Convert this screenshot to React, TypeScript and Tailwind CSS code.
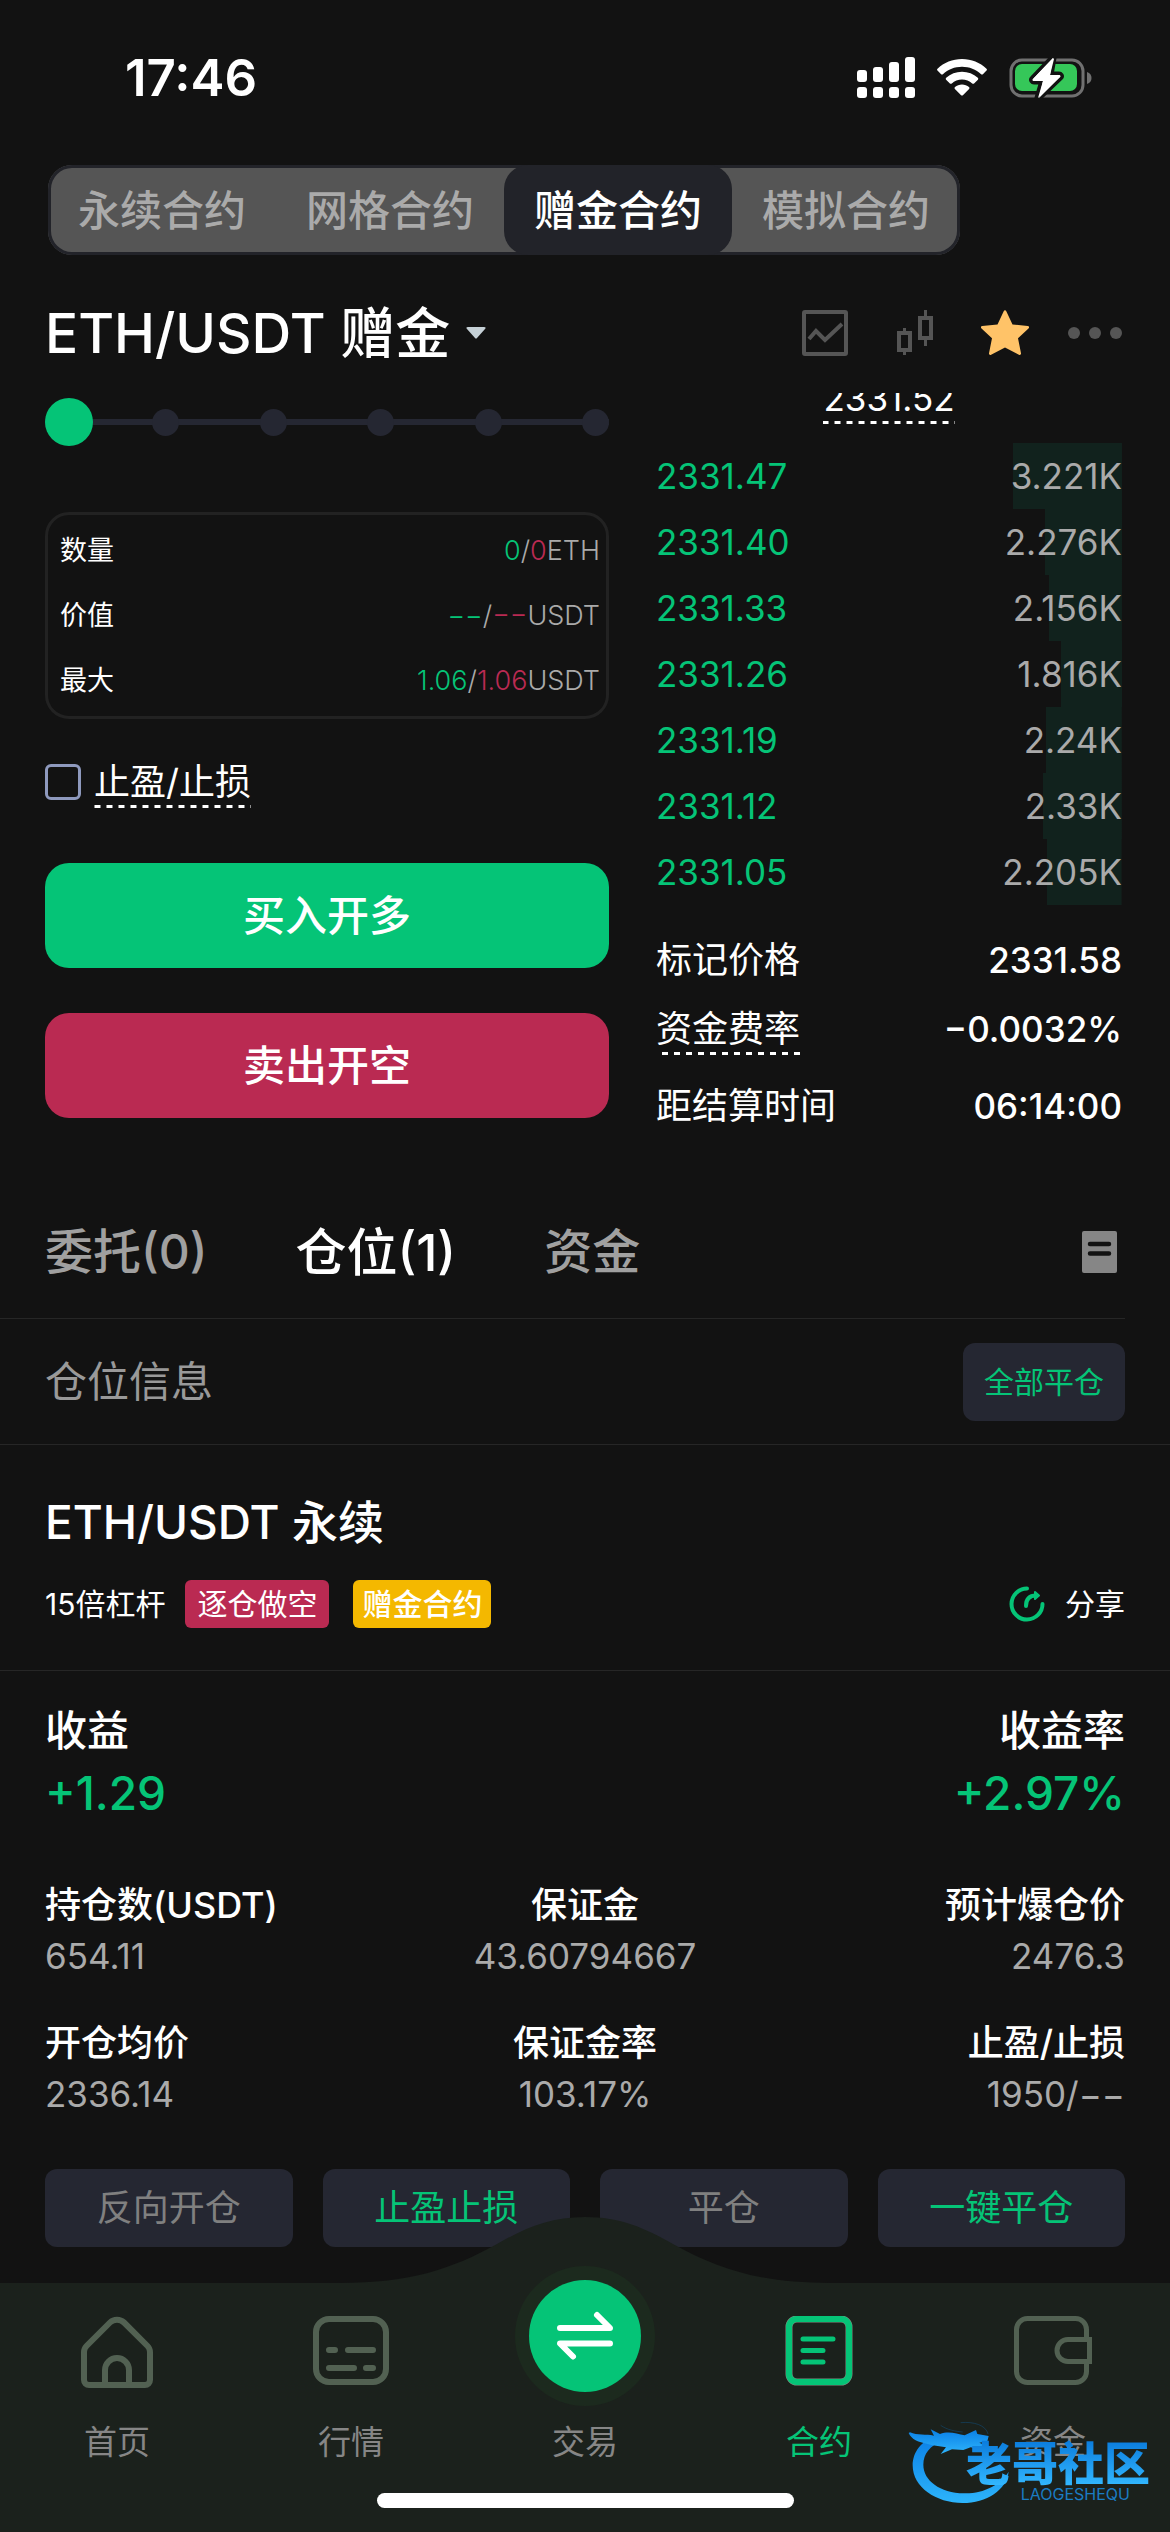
import React from "react";
import clsx from "clsx";

const modes = ["永续合约", "网格合约", "赠金合约", "模拟合约"];

const bids = [
  { price: "2331.47", amount: "3.221K", depth: 3221 },
  { price: "2331.40", amount: "2.276K", depth: 2276 },
  { price: "2331.33", amount: "2.156K", depth: 2156 },
  { price: "2331.26", amount: "1.816K", depth: 1816 },
  { price: "2331.19", amount: "2.24K", depth: 2240 },
  { price: "2331.12", amount: "2.33K", depth: 2330 },
  { price: "2331.05", amount: "2.205K", depth: 2205 },
];

const MAX_DEPTH = 13780;

const limits = [
  { label: "数量", long: "0", short: "0", unit: "ETH" },
  { label: "价值", long: "−−", short: "−−", unit: "USDT" },
  { label: "最大", long: "1.06", short: "1.06", unit: "USDT" },
];

const stats = [
  { label: "持仓数(USDT)", value: "654.11" },
  { label: "保证金", value: "43.60794667" },
  { label: "预计爆仓价", value: "2476.3" },
  { label: "开仓均价", value: "2336.14" },
  { label: "保证金率", value: "103.17%" },
  { label: "止盈/止损", value: "1950/−−" },
];

const actions = [
  { label: "反向开仓", active: false },
  { label: "止盈止损", active: true },
  { label: "平仓", active: false },
  { label: "一键平仓", active: true },
];

const dashed =
  "bg-[linear-gradient(90deg,#fff_50%,transparent_50%)] bg-[length:12px_3px] bg-repeat-x bg-bottom";

const StatusBar = () => (
  <div className="flex items-center justify-between pt-12 pb-[57px] pl-[125px] pr-[78px]">
    <span className="text-[51px] leading-[60px] font-semibold">17:46</span>
    <div className="flex items-center gap-[22px]">
      {/* Signal */}
      <svg width="58" height="42" viewBox="0 0 58 42" fill="#fff">
        <rect x="0" y="13" width="10" height="12" rx="3" />
        <rect x="16" y="10" width="10" height="15" rx="3" />
        <rect x="32" y="5" width="10" height="20" rx="3" />
        <rect x="48" y="0" width="10" height="25" rx="3" />
        <rect x="0" y="30" width="10" height="11" rx="3" />
        <rect x="16" y="30" width="10" height="11" rx="3" />
        <rect x="32" y="30" width="10" height="11" rx="3" />
        <rect x="48" y="30" width="10" height="11" rx="3" />
      </svg>
      {/* Wifi */}
      <svg width="50" height="38" viewBox="0 0 50 38" fill="#fff">
        <path d="M25 0C34.500 0 43 3.500 49.500 9.700c.6.600.6 1.300 0 1.900l-3.600 3.600c-.5.500-1.300.500-1.800 0C39 10.500 32.300 7.800 25 7.800S11 10.500 5.900 15.200c-.5.500-1.300.500-1.800 0L.5 11.600c-.6-.6-.6-1.300 0-1.900C7 3.500 15.500 0 25 0Z" />
        <path d="M25 12.800c6 0 11.500 2.200 15.800 6 .6.500.6 1.300.1 1.900l-3.800 3.700c-.5.500-1.300.5-1.900 0-2.700-2.400-6.300-3.800-10.200-3.800s-7.500 1.400-10.200 3.800c-.6.500-1.400.5-1.900 0l-3.800-3.700c-.5-.6-.5-1.400.1-1.900 4.300-3.800 9.800-6 15.800-6Z" />
        <path d="M25 25.500c2.700 0 5.100.9 7 2.500.6.500.6 1.300.1 1.900l-6.200 6.300c-.5.500-1.300.5-1.800 0l-6.200-6.300c-.5-.6-.5-1.400.1-1.900 1.900-1.600 4.300-2.500 7-2.500Z" />
      </svg>
      {/* Battery */}
      <svg width="83" height="42" viewBox="0 0 83 42">
        <rect x="2" y="3" width="72" height="36" rx="11" fill="none" stroke="#707070" strokeWidth="3" />
        <rect x="6" y="7" width="62" height="27" rx="7" fill="#35c759" />
        <path d="M78 15c3 1 4.500 3 4.500 6S81 26 78 27Z" fill="#707070" />
        <path
          d="M44 1 24 22c-1 1 0 2 1 2h9l-5 17L51 20c1-1 0-2-1-2h-9Z"
          fill="#fff"
          stroke="#121212"
          strokeWidth="7"
          strokeLinejoin="round"
          paintOrder="stroke"
        />
        <path d="M44 1 24 22c-1 1 0 2 1 2h9l-4 17L51 20c1-1 0-2-1-2h-9l4-16Z" fill="#fff" />
      </svg>
    </div>
  </div>
);

const ModeTabs = () => (
  <div className="flex px-12">
    <div className="flex rounded-3xl bg-[#555555] shadow-[inset_0_0_0_3px_#222329]">
      {modes.map((mode) => (
        <button
          key={mode}
          className={clsx(
            "h-[90px] px-[30px] text-[42px] font-medium rounded-3xl",
            mode === "赠金合约" ? "bg-[#222329] text-white" : "text-[#aaaaaa]"
          )}
        >
          {mode}
        </button>
      ))}
    </div>
  </div>
);

const PairHeader = () => (
  <header className="flex items-center justify-between pt-12 pb-[30px] pl-[45px] pr-12">
    <button className="flex items-center gap-4 text-[55px] leading-[60px] font-medium">
      ETH/USDT 赠金
      <svg width="20" height="12" viewBox="0 0 20 12" fill="#c5d0d6">
        <path d="M2 0h16c2 0 2 1 1 2l-8 9c-1 1-1 1-2 0L1 2C0 1 0 0 2 0Z" />
      </svg>
    </button>
    <div className="flex items-center">
      <button aria-label="走势">
        <svg width="46" height="46" viewBox="0 0 46 46" fill="none" stroke="#555" strokeWidth="4">
          <rect x="2" y="2" width="42" height="42" rx="1" />
          <path d="M7 29l7-8 9 9 17-16" />
        </svg>
      </button>
      <button aria-label="K线" className="ml-[49px]">
        <svg width="36" height="46" viewBox="0 0 36 46" fill="none" stroke="#555" strokeWidth="4">
          <rect x="2" y="23" width="11" height="17" />
          <path d="M7.500 18v4M7.500 41v4M28.500 0v6M28.500 30v6" strokeWidth="3" />
          <rect x="23" y="8" width="11" height="20" />
        </svg>
      </button>
      <button aria-label="收藏" className="ml-12">
        <svg width="48" height="46" viewBox="0 0 48 46" fill="#ffc368">
          <path d="M22.700 1.200c.6-1.300 2-1.300 2.600 0L31.500 14.500l15.300 1.600c1.400.2 1.700 1.400.7 2.300L37 28.300l3 15c.2 1.400-.9 2.100-2.100 1.500L24 37.500l-13.900 7.300c-1.200.6-2.300-.1-2.100-1.500l3-15L.5 18.400c-1-.9-.7-2.100.7-2.300l15.300-1.600Z" />
        </svg>
      </button>
      <button aria-label="更多" className="ml-[39px]">
        <svg width="54" height="12" viewBox="0 0 54 12" fill="#555">
          <circle cx="6" cy="6" r="6" />
          <circle cx="27" cy="6" r="6" />
          <circle cx="48" cy="6" r="6" />
        </svg>
      </button>
    </div>
  </header>
);

const OrderForm = () => (
  <div className="flex flex-col">
    <div className="relative mt-[5px] h-12">
      <div className="flex h-full items-center justify-between bg-[linear-gradient(#252732,#252732)] bg-[length:100%_6px] bg-center bg-no-repeat">
        {[0, 20, 40, 60, 80, 100].map((step) => (
          <span key={step} className="size-[27px] rounded-full bg-[#252732]" />
        ))}
      </div>
      <input
        type="range"
        aria-label="仓位比例"
        defaultValue={0}
        className="absolute inset-0 h-12 w-full appearance-none bg-transparent [&::-webkit-slider-thumb]:size-12 [&::-webkit-slider-thumb]:appearance-none [&::-webkit-slider-thumb]:rounded-full [&::-webkit-slider-thumb]:bg-[#05c477]"
      />
    </div>

    <dl className="mt-[66px] rounded-3xl border-[3px] border-[#222222] py-[3px] pl-3 pr-1.5 text-[27px] leading-[65px]">
      {limits.map((item) => (
        <div key={item.label} className="flex justify-between">
          <dt>{item.label}</dt>
          <dd className="font-light text-[#aaaaaa]">
            <span className="text-[#05c477]">{item.long}</span>/
            <span className="text-[#ba2a52]">{item.short}</span>
            {item.unit}
          </dd>
        </div>
      ))}
    </dl>

    <label className="mt-[45px] flex items-start gap-[13px] text-4xl leading-9">
      <input
        type="checkbox"
        className="size-9 appearance-none rounded-md border-[3px] border-[#8e99bd]"
      />
      <span className={clsx("pb-2 leading-9", dashed)}>止盈/止损</span>
    </label>

    <button className="mt-[55px] h-[105px] rounded-3xl bg-[#05c477] text-[42px] font-medium">
      买入开多
    </button>
    <button className="mt-[45px] h-[105px] rounded-3xl bg-[#ba2a52] text-[42px] font-medium">
      卖出开空
    </button>
  </div>
);

const OrderBook = () => (
  <div className="text-4xl leading-9">
    {/* Last price, scrolled halfway under the header */}
    <div className="-mt-[13px] mb-[19px] flex justify-center">
      <span className={clsx("pb-2 text-[35px] leading-9", dashed)}>2331.52</span>
    </div>
    <table className="w-full border-collapse">
      <tbody>
        {bids.map((bid) => (
          <tr
            key={bid.price}
            className="h-[66px] bg-[linear-gradient(#11221d,#11221d)] bg-right bg-no-repeat"
            style={{ backgroundSize: `${(bid.depth / MAX_DEPTH) * 100}% 100%` }}
          >
            <td className="p-0 text-left text-[35px] text-[#05c477]">{bid.price}</td>
            <td className="p-0 text-right text-[35px] text-[#aaaaaa]">{bid.amount}</td>
          </tr>
        ))}
      </tbody>
    </table>
    <dl className="mt-[37px] flex flex-col gap-[33px]">
      <div className="flex items-start justify-between">
        <dt>标记价格</dt>
        <dd className="text-[35px] font-medium">2331.58</dd>
      </div>
      <div className="flex items-start justify-between">
        <dt className={clsx("pb-2", dashed)}>资金费率</dt>
        <dd className="text-[35px] font-medium">−0.0032%</dd>
      </div>
      <div className="flex items-start justify-between">
        <dt>距结算时间</dt>
        <dd className="text-[35px] font-medium">06:14:00</dd>
      </div>
    </dl>
  </div>
);

const PositionTabs = () => (
  <div className="mt-10 mr-[45px] flex h-[133px] items-center justify-between border-b border-[#262626] pl-[45px] pr-2">
    <div className="flex items-center gap-[88px] text-5xl font-medium text-[#a0a0a0]">
      <button>委托(0)</button>
      <button className="text-[51px] text-white">仓位(1)</button>
      <button>资金</button>
    </div>
    <button aria-label="历史记录">
      <svg width="35" height="42" viewBox="0 0 35 42">
        <rect width="35" height="42" rx="2" fill="#868686" />
        <path d="M8 13h19M8 22.500h19" stroke="#121212" strokeWidth="4.500" strokeLinecap="round" />
      </svg>
    </button>
  </div>
);

const Position = () => (
  <section>
    <div className="flex h-[126px] items-center justify-between border-b border-[#262626] px-[45px]">
      <h2 className="text-[42px] text-[#999999]">仓位信息</h2>
      <button className="h-[78px] rounded-xl bg-[#252732] px-[21px] text-3xl text-[#05c477]">
        全部平仓
      </button>
    </div>

    <div className="border-b border-[#262626] px-[45px] pt-[47px] pb-[42px]">
      <h3 className="text-[46px] leading-[60px] font-medium">ETH/USDT 永续</h3>
      <div className="mt-7 flex h-12 items-center text-3xl leading-[48px]">
        <span>15倍杠杆</span>
        <span className="ml-5 rounded-md bg-[#ba2a52] px-3">逐仓做空</span>
        <span className="ml-6 rounded-md bg-[#f4b800] px-[9px] font-medium">赠金合约</span>
        <button className="ml-auto flex items-center gap-5">
          <svg width="36" height="36" viewBox="0 0 36 36" fill="none" stroke="#05c477" strokeWidth="4" strokeLinecap="round">
            <path d="M18 2.500A15.500 15.500 0 1 0 33.500 18" />
            <path d="M17 20c0-7 3-10.500 10-10.500" />
            <path d="M26 6l4 3.500-4 3.500Z" fill="#05c477" strokeWidth="2" strokeLinejoin="round" />
          </svg>
          分享
        </button>
      </div>
    </div>

    <div className="px-[45px] pt-[29px] pb-9">
      <dl className="flex justify-between leading-[62px] font-medium">
        <div>
          <dt className="text-[42px]">收益</dt>
          <dd className="text-[46px] text-[#05c477]">+1.29</dd>
        </div>
        <div className="text-right">
          <dt className="text-[42px]">收益率</dt>
          <dd className="text-[46px] text-[#05c477]">+2.97%</dd>
        </div>
      </dl>

      <dl className="mt-14 grid grid-cols-3 gap-y-9 text-[36px] leading-[51px]">
        {stats.map((stat, index) => (
          <div
            key={stat.label}
            className={clsx(index % 3 === 1 && "text-center", index % 3 === 2 && "text-right")}
          >
            <dt className="font-medium">{stat.label}</dt>
            <dd className="text-[35px] text-[#aaaaaa]">{stat.value}</dd>
          </div>
        ))}
      </dl>

      <div className="mt-[49px] grid grid-cols-4 gap-[30px]">
        {actions.map((action) => (
          <button
            key={action.label}
            className={clsx(
              "h-[78px] rounded-xl bg-[#252732] text-4xl",
              action.active ? "text-[#05c477]" : "text-[#808080]"
            )}
          >
            {action.label}
          </button>
        ))}
      </div>
    </div>
  </section>
);

const HomeIcon = () => (
  <svg width="72" height="72" viewBox="0 0 72 72" fill="none" stroke="#526152" strokeWidth="6">
    <path d="M3 64V36a9 9 0 0 1 2.500-6L29 6.500a10 10 0 0 1 14 0L66.500 30a9 9 0 0 1 2.500 6v28a5 5 0 0 1-5 5H8a5 5 0 0 1-5-5Z" />
    <path d="M24 69V54a12 12 0 0 1 24 0v15" />
  </svg>
);

const MarketIcon = () => (
  <svg width="76" height="72" viewBox="0 0 76 72" fill="none" stroke="#526152" strokeWidth="6">
    <rect x="3" y="3" width="70" height="63" rx="13" />
    <path d="M16 34h6M35 34h25M16 52h25M53 52h7" strokeLinecap="round" />
  </svg>
);

const SwapIcon = () => (
  <svg width="142" height="142" viewBox="0 0 142 142" className="-mt-8 shrink-0">
    <circle cx="71" cy="71" r="70" fill="#1c2a1e" />
    <circle cx="71" cy="71" r="56" fill="#05c477" />
    <g fill="none" stroke="#fff" strokeWidth="6" strokeLinecap="round" strokeLinejoin="round">
      <path d="M46 63h50L83 50" />
      <path d="M96 78.500H46l13 13" />
    </g>
  </svg>
);

const ContractIcon = () => (
  <svg width="68" height="72" viewBox="0 0 68 72" fill="none">
    <rect x="4" y="3" width="60" height="63" rx="8" stroke="#7d8f80" strokeWidth="7" />
    <rect x="4" y="3" width="60" height="63" rx="8" stroke="#05c477" strokeWidth="6" />
    <path d="M18 23h30M18 34.500h20M18 46h20" stroke="#05c477" strokeWidth="5" strokeLinecap="round" />
  </svg>
);

const WalletIcon = () => (
  <svg width="78" height="72" viewBox="0 0 78 72" fill="none" stroke="#526152" strokeWidth="5">
    <path d="M72.500 22v-8.500a11 11 0 0 0-11-11h-48a11 11 0 0 0-11 11v42a11 11 0 0 0 11 11h48a11 11 0 0 0 11-11V47" />
    <path d="M75.500 23.500H54a11 11 0 0 0 0 22h21.500Z" />
  </svg>
);

const navItems = [
  { label: "首页", icon: <HomeIcon /> },
  { label: "行情", icon: <MarketIcon /> },
  { label: "交易", icon: <SwapIcon /> },
  { label: "合约", icon: <ContractIcon />, active: true },
  { label: "资金", icon: <WalletIcon /> },
];

const Watermark = () => (
  <div className="pointer-events-none absolute right-[20px] bottom-[26px] h-[88px] w-[242px]">
    <svg width="104" height="88" viewBox="22 50 312 264" className="absolute top-0 left-0">
      <defs>
        <linearGradient id="dragon" x1="0" y1="0" x2="0" y2="1">
          <stop offset="0" stopColor="#0a7fe6" />
          <stop offset="1" stopColor="#2db4fb" />
        </linearGradient>
      </defs>
      <g fill="url(#dragon)">
        <path d="M112 104C60 116 36 155 36 192c0 66 70 113 150 113 72 0 132-40 138-94-24 38-76 67-134 65-72-2-122-38-122-86 0-32 20-58 58-70Z" />
        <path d="M28 93c22 10 48 5 72 10L90 84l28 14c24-10 50-2 74 4l34-16 4 12 34 6-4 16-24 4 22 10-8 12-40-8-22 8-34-2-34 14 16-20-40-6-30-8c-12-2-34-10-42-29Z" />
      </g>
      <path d="M120 72c20 14 44 18 66 20M180 64c40-4 76 8 82 34" fill="none" stroke="#0f4f80" strokeWidth="3" opacity=".5" />
    </svg>
    <div className="absolute right-0 bottom-1 flex flex-col items-end">
      <span className="bg-gradient-to-b from-[#0a7bdc] to-[#33b8ff] bg-clip-text text-[46px] leading-[46px] font-black text-transparent">
        老哥社区
      </span>
      <span className="pr-5 text-base leading-4 text-[#1a7cc4]">LAOGESHEQU</span>
    </div>
  </div>
);

const BottomNav = () => (
  <nav className="relative mt-auto bg-[#1b211c] pb-6">
    {/* Hump behind the trade button */}
    <svg
      width="490"
      height="67"
      viewBox="0 0 490 67"
      className="absolute -top-[66px] left-1/2 -translate-x-1/2"
      fill="#1b211c"
    >
      <path d="M0 67V66C70 66 112 52 157 27C185 11 210 0 245 0s60 11 88 27c45 25 87 39 157 39v1Z" />
    </svg>
    <div className="relative grid grid-cols-5 pt-[33px]">
      {navItems.map((item) => (
        <a
          key={item.label}
          href="#"
          className={clsx(
            "flex flex-col items-center text-[33px] leading-[42px]",
            item.active ? "text-[#05c477]" : "text-[#868686]"
          )}
        >
          <span className="flex h-[72px] items-center">{item.icon}</span>
          <span className="mt-[33px]">{item.label}</span>
        </a>
      ))}
    </div>
    <div className="mx-auto mt-[30px] h-[15px] w-[417px] rounded-full bg-white" />
    <Watermark />
  </nav>
);

const App = () => {
  return (
    <div className="flex min-h-screen flex-col overflow-x-hidden bg-[#121212] font-[Inter,'Noto_Sans_CJK_SC',sans-serif] text-white">
      <StatusBar />
      <ModeTabs />
      <PairHeader />
      <main>
        <section className="grid grid-cols-[564fr_466fr] gap-[47px] overflow-hidden pb-[22px] pl-[45px] pr-12">
          <OrderForm />
          <OrderBook />
        </section>
        <PositionTabs />
        <Position />
      </main>
      <BottomNav />
    </div>
  );
};

export default App;
